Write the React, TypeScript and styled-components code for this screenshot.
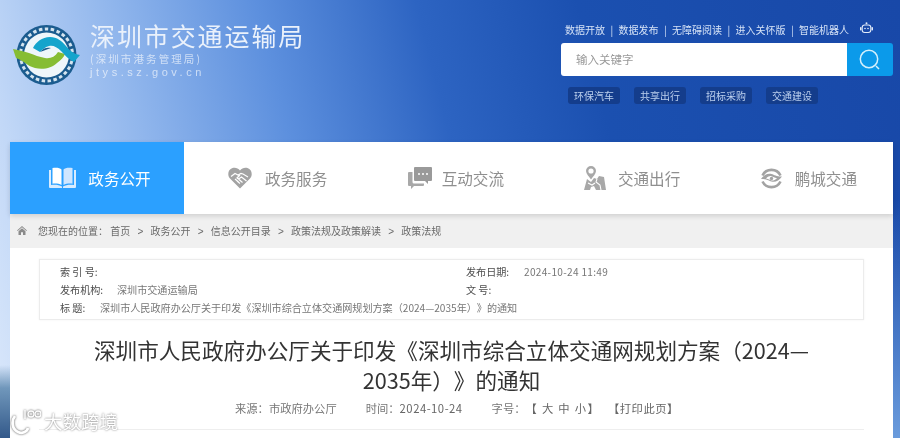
import styled, { createGlobalStyle } from "styled-components";

const GlobalStyle = createGlobalStyle`
  html, body {
    margin: 0;
    padding: 0;
    height: 438px;
    overflow: hidden;
  }
  body {
    font-family: "Noto Sans CJK SC", "Liberation Sans", sans-serif;
    text-spacing-trim: space-all;
  }
`;

const Page = styled.div`
  position: relative;
  width: 900px;
  height: 438px;
  overflow: hidden;
  padding: 0 7px 0 10px;
  box-sizing: border-box;
  filter: blur(0.35px);
  background:
    linear-gradient(to bottom, rgba(63, 100, 140, 0) 365px, #7097bb 388px, #33598a 438px) left top / 10px 100% no-repeat,
    linear-gradient(to bottom, rgba(106, 155, 220, 0) 200px, #6a9bdc 438px) right top / 7px 100% no-repeat,
    linear-gradient(76deg, #dbe8fb 0, #c2d8f7 8%, #8fb5ec 22%, #5d90de 36%, #2d64c2 52%, #1b50b0 68%, #1848a8 100%);
`;

const Header = styled.header`
  display: flex;
  justify-content: space-between;
  height: 142px;
  box-sizing: border-box;
`;

const Brand = styled.div`
  display: flex;
  gap: 10px;
  padding: 22px 0 0 3px;
`;

const BrandText = styled.div`
  display: flex;
  flex-direction: column;
  margin-top: -2px;
  color: #fff;
`;

const BrandTitle = styled.div`
  font-size: 25px;
  line-height: 30px;
  letter-spacing: 1.9px;
  color: #eaf1fb;
`;

const BrandSub = styled.div`
  margin-top: 2px;
  font-size: 10.5px;
  line-height: 13px;
  letter-spacing: 2.1px;
  color: rgba(255, 255, 255, 0.62);
`;

const BrandUrl = styled.div`
  font-size: 11px;
  line-height: 14px;
  letter-spacing: 3.55px;
  font-family: "Liberation Sans", sans-serif;
  color: rgba(255, 255, 255, 0.62);
`;

const HeaderRight = styled.div`
  width: 332px;
  padding-top: 21px;
  box-sizing: border-box;
`;

const TopLinks = styled.div`
  display: flex;
  align-items: center;
  height: 16px;
  padding-left: 4px;
  margin-bottom: 6px;
  font-size: 10px;
  color: #d5e2f6;
`;

const TopLink = styled.span`
  white-space: nowrap;
`;

const Divider = styled.span`
  display: inline-block;
  width: 13.5px;
  text-align: center;
`;

const RobotSlot = styled.span`
  display: flex;
  margin: -3px 0 0 11px;
`;

const SearchBar = styled.div`
  display: flex;
  height: 33px;
  border-radius: 3px;
  overflow: hidden;
`;

const SearchInput = styled.div`
  flex: 1;
  background: #fff;
  color: #999;
  font-size: 11.5px;
  line-height: 33px;
  padding-left: 15px;
`;

const SearchButton = styled.div`
  width: 46px;
  background: #0b9aea;
  display: flex;
  align-items: center;
  justify-content: center;
`;

const Tags = styled.div`
  display: flex;
  gap: 14px;
  margin: 11px 0 0 7px;
`;

const Tag = styled.span`
  height: 17px;
  line-height: 17px;
  padding: 0 6px;
  border-radius: 3px;
  background: #143d8c;
  color: #bcd0ee;
  font-size: 10px;
`;

const Card = styled.div`
  background: #fff;
  height: 296px;
`;

const Nav = styled.nav`
  display: grid;
  grid-template-columns: 174px repeat(4, 1fr);
  height: 72px;
  background: #fff;
  box-shadow: 0 2px 5px rgba(0, 0, 0, 0.14);
  position: relative;
`;

const NavItem = styled.div<{ $active?: boolean; $shift?: number; $gap?: number }>`
  display: flex;
  align-items: center;
  justify-content: center;
  gap: ${(p) => p.$gap ?? 12}px;
  padding-left: ${(p) => p.$shift ?? 0}px;
  font-size: 15.6px;
  background: ${(p) => (p.$active ? "#2ba0ff" : "transparent")};
  color: ${(p) => (p.$active ? "#fff" : "#8f8f8f")};
`;

const Crumbs = styled.div`
  display: flex;
  align-items: center;
  height: 33px;
  padding: 0 0 1px 7px;
  background: #f0f0f0;
  color: #6a6a6a;
  font-size: 10px;
`;

const CrumbLabel = styled.span`
  margin-left: 11px;
`;

const CrumbArrow = styled.span`
  display: inline-block;
  width: 20.25px;
  text-align: center;
  font-family: "Liberation Sans", sans-serif;
`;

const InfoBox = styled.div`
  display: grid;
  grid-template-columns: 406px 1fr;
  grid-auto-rows: 18px;
  align-items: center;
  margin: 11px 29px 0;
  padding: 2px 0 3px 20px;
  border: 1px solid #ececec;
  box-shadow: 0 0 2px rgba(0, 0, 0, 0.06);
  font-size: 10.1px;
  color: #555;
`;

const InfoCell = styled.div<{ $wide?: boolean }>`
  display: flex;
  white-space: nowrap;
  ${(p) => (p.$wide ? "grid-column: 1 / -1;" : "")}
`;

const InfoLabel = styled.span<{ $width?: number }>`
  width: ${(p) => p.$width ?? 57}px;
  color: #4d4d4d;
`;

const InfoValue = styled.span<{ $spacing?: number }>`
  color: #777;
  letter-spacing: ${(p) => p.$spacing ?? 0}px;
`;

const Heading = styled.h1`
  margin: 15px 0 0;
  padding: 0 70px;
  font-size: 21.6px;
  line-height: 30px;
  font-weight: 400;
  text-align: center;
  color: #333;
`;

const Meta = styled.div`
  display: flex;
  margin: 4px 29px 0;
  padding: 0 0 12px 196px;
  height: 18px;
  line-height: 18px;
  font-size: 11.3px;
  color: #777;
  border-bottom: 1px solid #eee;
`;

const MetaItem = styled.span`
  margin-right: 29px;
  white-space: nowrap;
`;

const MetaDate = styled.span`
  letter-spacing: 0.5px;
  color: #666;
`;

const MetaSize = styled.span`
  letter-spacing: 1.3px;
  color: #666;
`;

const MetaPrint = styled.span`
  margin-left: -21px;
  letter-spacing: 0.5px;
  color: #666;
  white-space: nowrap;
`;

const Watermark = styled.div`
  position: absolute;
  left: 10px;
  top: 407px;
  display: flex;
  align-items: center;
  gap: 3px;
  font-size: 18.5px;
  line-height: 28px;
  color: #fff;
  text-shadow: 0 0 2px rgba(70, 70, 70, 0.8);
`;

const WatermarkMark = styled.svg`
  filter: drop-shadow(0 0 1px rgba(60, 60, 60, 0.9));
`;

const BookIcon = () => (
  <svg width="27" height="22" viewBox="0 0 27 22">
    <path d="M0 3h2v15c4-.6 8-.2 11 1.500V21H1a1 1 0 0 1-1-1z" fill="#d8ecff" />
    <path d="M27 3h-2v15c-4-.6-8-.2-11 1.500V21h12a1 1 0 0 0 1-1z" fill="#d8ecff" />
    <path d="M3.500 1c3.800-.8 7.500-.2 9 1.500v15.500c-2.500-1.300-5.500-1.700-9-1.300z" fill="#fff" />
    <path d="M23.500 1c-3.800-.8-7.500-.2-9 1.500v15.500c2.500-1.300 5.500-1.700 9-1.300z" fill="#cfe6ff" />
  </svg>
);

const HandshakeIcon = () => (
  <svg width="24" height="22" viewBox="0 0 24 22">
    <path d="M12 21.500 2 11.500C-1 8 0 2.500 4.500 1c2.800-.9 5.500 0 7.500 2.500C14 1 16.700.1 19.500 1 24 2.500 25 8 22 11.500z" fill="#a3a3a3" />
    <path d="M3 9.500l4-3 3 1.500 3-1.500 2 .5 5 3M12 8l-3 3 1.500 1 3-2 5 4M9 14l3 2.500M11 12.500l3.500 3M7 12l3.500 3" fill="none" stroke="#fff" strokeWidth="1.200" />
  </svg>
);

const ChatIcon = () => (
  <svg width="24" height="22" viewBox="0 0 24 22">
    <path d="M7 0h16a1 1 0 0 1 1 1v12a1 1 0 0 1-1 1h-3v3l-3-3H7a1 1 0 0 1-1-1V1a1 1 0 0 1 1-1z" fill="#9a9a9a" />
    <path d="M4.500 5H1a1 1 0 0 0-1 1v12a1 1 0 0 0 1 1h2v3l3-3h9a1 1 0 0 0 1-1v-1.500H6a1.500 1.500 0 0 1-1.500-1.500z" fill="#a8a8a8" />
    <circle cx="11" cy="7" r="1" fill="#fff" />
    <circle cx="15" cy="7" r="1" fill="#fff" />
    <circle cx="19" cy="7" r="1" fill="#fff" />
  </svg>
);

const MapIcon = () => (
  <svg width="22" height="24" viewBox="0 0 22 24">
    <path d="M7 0a5 5 0 0 1 5 5c0 2.800-3 5.500-5 8.500C5 10.500 2 7.800 2 5a5 5 0 0 1 5-5z" fill="#a8a8a8" />
    <circle cx="7" cy="5" r="2.600" fill="#fff" />
    <path d="M3 13l4 3 3-4 3 1 2-3 5 1 2 13H12l-2-4-3 1-1 3H0z" fill="#a8a8a8" />
    <path d="M13 13l-1 3 4 3 1 5M4 17l4 2 3-2" fill="none" stroke="#fff" strokeWidth="1.100" />
  </svg>
);

const EyeIcon = () => (
  <svg width="23" height="23" viewBox="0 0 23 23">
    <path d="M2.500 8.500A10 10 0 0 1 20.500 8.500M20.500 14.500A10 10 0 0 1 2.500 14.500" fill="none" stroke="#a3a3a3" strokeWidth="2.600" />
    <path d="M1 12c3-4.500 7-6 10.500-5 3 .8 4.500 2.500 10.500 2.500-3 4.500-7 6-10.500 5-3-.8-4.500-2.500-10.500-2.500z" fill="#a3a3a3" />
    <path d="M6 11.500c2-2 4-2.700 5.500-2.300s3 1.400 5.500 2c-2 2-4 2.700-5.500 2.300s-3-1.400-5.500-2z" fill="#fff" />
    <circle cx="11.500" cy="11.500" r="1.700" fill="#a3a3a3" />
  </svg>
);

const HomeIcon = () => (
  <svg width="10" height="9" viewBox="0 0 10 9">
    <path d="M5 0 0 4.500l.7.600L5 1.300l4.300 3.800.7-.6zM1.500 5.300V9h2.500V6.300h2V9h2.500V5.300L5 2.200z" fill="#8a8a8a" />
  </svg>
);

const RobotIcon = () => (
  <svg width="13" height="12" viewBox="0 0 13 12">
    <circle cx="6.500" cy="1.300" r="1" fill="#e3ecfa" />
    <rect x="2.200" y="3" width="8.600" height="7.500" rx="2.500" fill="none" stroke="#e3ecfa" strokeWidth="1.100" />
    <rect x="0" y="5" width="1.500" height="3.500" rx=".7" fill="#e3ecfa" />
    <rect x="11.500" y="5" width="1.500" height="3.500" rx=".7" fill="#e3ecfa" />
    <circle cx="5" cy="6.500" r=".8" fill="#e3ecfa" />
    <circle cx="8" cy="6.500" r=".8" fill="#e3ecfa" />
  </svg>
);

const SearchIcon = () => (
  <svg width="22" height="22" viewBox="0 0 22 22">
    <circle cx="10" cy="10" r="8.700" fill="none" stroke="#d3effc" strokeWidth="1.500" />
    <path d="M17 17l3 3" stroke="#d3effc" strokeWidth="1.500" />
  </svg>
);

const Logo = () => (
  <svg width="67" height="67" viewBox="0 0 67 67">
    <circle cx="33.500" cy="33" r="30" fill="#1b5c8f" />
    <circle cx="33.500" cy="33" r="26" fill="none" stroke="#d4e4ef" strokeWidth="3" strokeDasharray="3.500 2.500" />
    <circle cx="33.500" cy="33" r="22.500" fill="#eef6fa" />
    <path d="M0 27 3 36 C10 38 14 44 22 46 C30 48 39 46 44 41 C48 38 51 35 52 32 L45 30 C42 35 37 37 32 36 C26 35 22 33 16 31 C10 29 5 28 0 27Z" fill="#86bd33" />
    <path d="M67 33 61 40 C55 37 52 33 48 29 C44 25 40 23 36 24 C32 25 29 28 27 30 L20 26 C23 20 29 15 37 15 C44 15 49 19 53 24 C57 29 61 32 67 33Z" fill="#14a4cc" />
    <path d="M27 30 C30 26 34 25 38 26 C34 27 31 29 27 30Z" fill="#1b5c8f" />
  </svg>
);

const WatermarkLogo = () => (
  <WatermarkMark width="31" height="28" viewBox="0 0 31 28">
    <path d="M5 9C1 14 2 22 8 25c4 2 9 0 10-4" fill="none" stroke="#fff" strokeWidth="2.800" />
    <path d="M15 3v9" stroke="#fff" strokeWidth="1.400" />
    <circle cx="21" cy="7" r="3" fill="none" stroke="#fff" strokeWidth="1.300" />
    <circle cx="28" cy="7" r="3" fill="none" stroke="#fff" strokeWidth="1.300" />
  </WatermarkMark>
);

const topLinks = ["数据开放", "数据发布", "无障碍阅读", "进入关怀版", "智能机器人"];
const tags = ["环保汽车", "共享出行", "招标采购", "交通建设"];
const crumbs = ["您现在的位置： 首页", "政务公开", "信息公开目录", "政策法规及政策解读", "政策法规"];

const App = () => {
  return (
    <Page>
      <GlobalStyle />
      <Header>
        <Brand>
          <Logo />
          <BrandText>
            <BrandTitle>深圳市交通运输局</BrandTitle>
            <BrandSub>(深圳市港务管理局)</BrandSub>
            <BrandUrl>jtys.sz.gov.cn</BrandUrl>
          </BrandText>
        </Brand>
        <HeaderRight>
          <TopLinks>
            {topLinks.map((link, i) => (
              <TopLink key={link}>
                {link}
                {i < topLinks.length - 1 && <Divider>|</Divider>}
              </TopLink>
            ))}
            <RobotSlot>
              <RobotIcon />
            </RobotSlot>
          </TopLinks>
          <SearchBar>
            <SearchInput>输入关键字</SearchInput>
            <SearchButton>
              <SearchIcon />
            </SearchButton>
          </SearchBar>
          <Tags>
            {tags.map((tag) => (
              <Tag key={tag}>{tag}</Tag>
            ))}
          </Tags>
        </HeaderRight>
      </Header>
      <Card>
        <Nav>
          <NavItem $active $shift={6}>
            <BookIcon />
            政务公开
          </NavItem>
          <NavItem $shift={10} $gap={13}>
            <HandshakeIcon />
            政务服务
          </NavItem>
          <NavItem $shift={12} $gap={10}>
            <ChatIcon />
            互动交流
          </NavItem>
          <NavItem $shift={10}>
            <MapIcon />
            交通出行
          </NavItem>
          <NavItem $shift={8}>
            <EyeIcon />
            鹏城交通
          </NavItem>
        </Nav>
        <Crumbs>
          <HomeIcon />
          <CrumbLabel>
            {crumbs.map((crumb, i) => (
              <span key={crumb}>
                {i > 0 && <CrumbArrow>&gt;</CrumbArrow>}
                {crumb}
              </span>
            ))}
          </CrumbLabel>
        </Crumbs>
        <InfoBox>
          <InfoCell>
            <InfoLabel>索 引 号:</InfoLabel>
          </InfoCell>
          <InfoCell>
            <InfoLabel $width={58}>发布日期:</InfoLabel>
            <InfoValue $spacing={0.3}>2024-10-24 11:49</InfoValue>
          </InfoCell>
          <InfoCell>
            <InfoLabel>发布机构:</InfoLabel>
            <InfoValue>深圳市交通运输局</InfoValue>
          </InfoCell>
          <InfoCell>
            <InfoLabel>文 号:</InfoLabel>
          </InfoCell>
          <InfoCell $wide>
            <InfoLabel $width={40}>标 题:</InfoLabel>
            <InfoValue>深圳市人民政府办公厅关于印发《深圳市综合立体交通网规划方案（2024—2035年）》的通知</InfoValue>
          </InfoCell>
        </InfoBox>
        <Heading>深圳市人民政府办公厅关于印发《深圳市综合立体交通网规划方案（2024—2035年）》的通知</Heading>
        <Meta>
          <MetaItem>来源：市政府办公厅</MetaItem>
          <MetaItem>
            时间：<MetaDate>2024-10-24</MetaDate>
          </MetaItem>
          <MetaItem>
            字号：<MetaSize>【 大 中 小】</MetaSize>
          </MetaItem>
          <MetaPrint>【打印此页】</MetaPrint>
        </Meta>
      </Card>
      <Watermark>
        <WatermarkLogo />
        大数跨境
      </Watermark>
    </Page>
  );
};

export default App;
